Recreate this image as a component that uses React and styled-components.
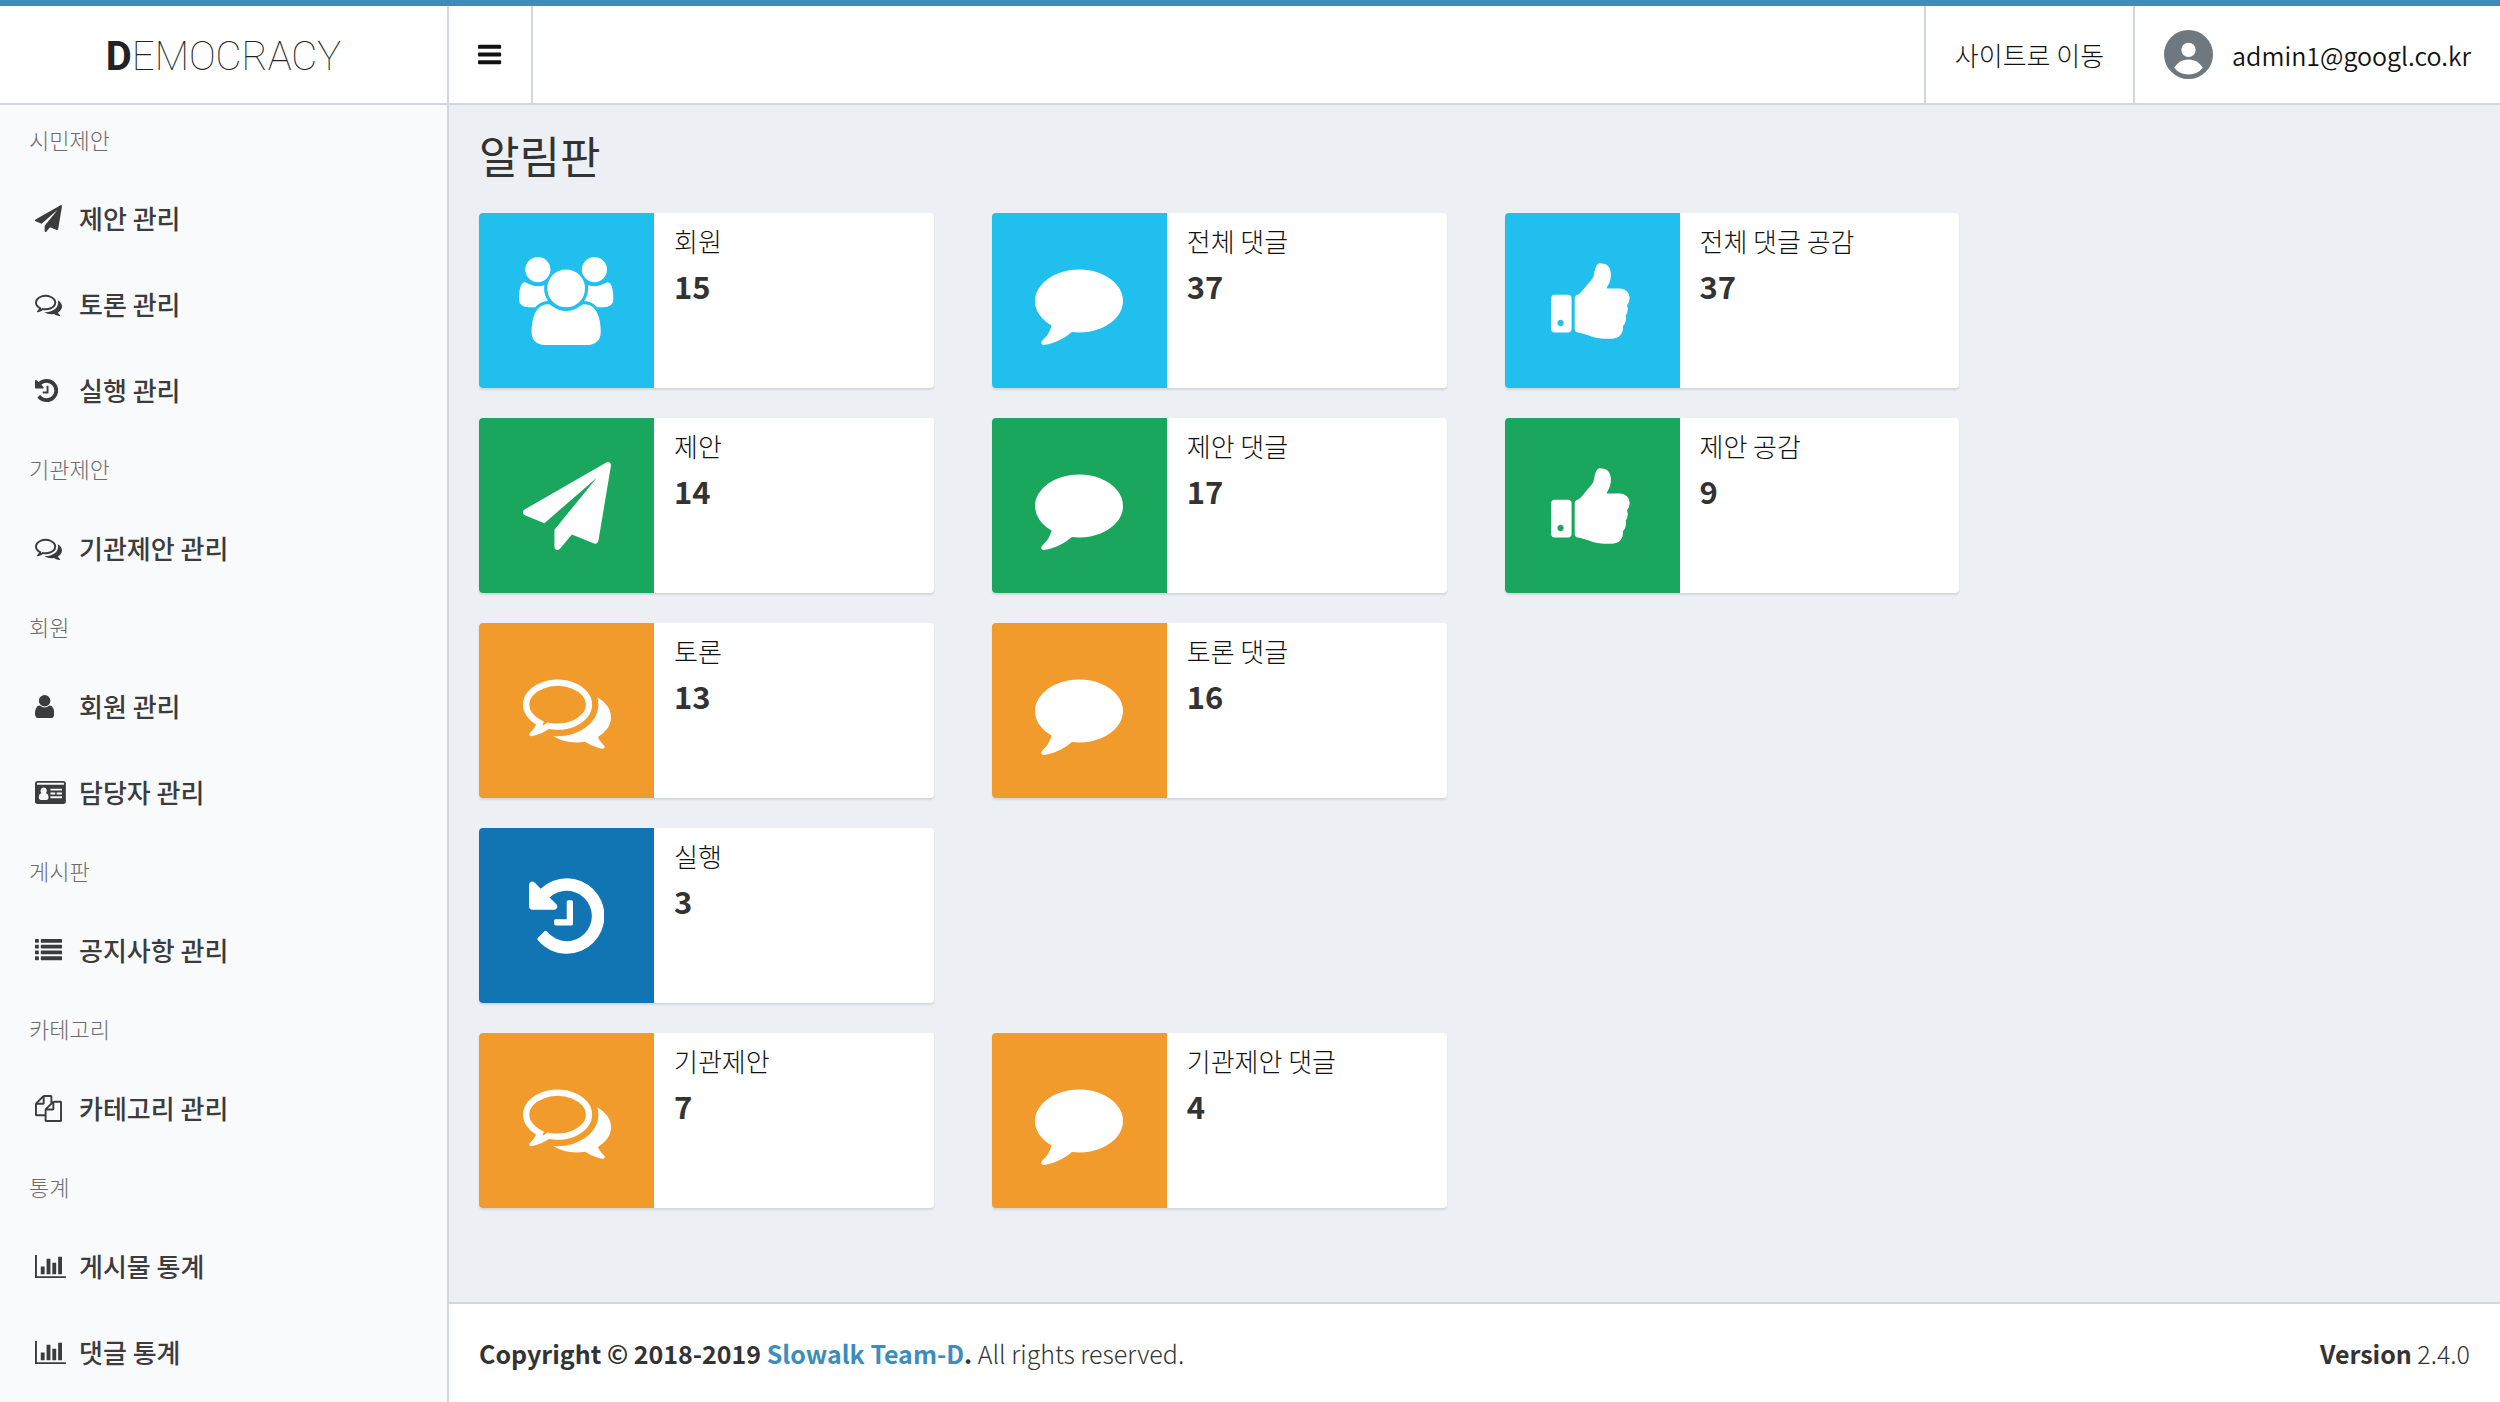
import React from "react";
import styled, { createGlobalStyle } from "styled-components";

const LINE = "#d2d6de";
const SANS = '"Noto Sans CJK KR", "Noto Sans", sans-serif';

const GlobalStyle = createGlobalStyle`
  *, *::before, *::after { box-sizing: border-box; }
  body {
    margin: 0;
    background: #f9fafc;
    color: #333;
    font-family: ${SANS};
    font-size: 26px;
    line-height: 40px;
  }
  a { color: inherit; text-decoration: none; }
  b { font-weight: 700; }
`;

/* ---------- icons ---------- */

const ICONS = {
  users: {
    box: [0, 1920],
    d: "M593 896q-162 5-265 128h-134q-82 0-138-40.5t-56-118.5q0-353 124-353 6 0 43.5 21t97.5 42.5 119 21.5q67 0 133-23-5 37-5 66 0 139 81 256zm1071 637q0 120-73 189.5t-194 69.5h-874q-121 0-194-69.5t-73-189.5q0-53 3.5-103.5t14-109 26.5-108.5 43-97.5 62-81 85.5-53.5 111.5-20q10 0 43 21.5t73 48 107 48 135 21.5 135-21.5 107-48 73-48 43-21.5q61 0 111.5 20t85.5 53.5 62 81 43 97.5 26.5 108.5 14 109 3.500 103.5zm-1024-1277q0 106-75 181t-181 75-181-75-75-181 75-181 181-75 181 75 75 181zm704 384q0 159-112.5 271.5t-271.5 112.5-271.5-112.5-112.5-271.5 112.5-271.5 271.5-112.5 271.5 112.5 112.5 271.5zm576 225q0 78-56 118.5t-138 40.5h-134q-103-123-265-128 81-117 81-256 0-29-5-66 66 23 133 23 59 0 119-21.5t97.5-42.5 43.5-21q124 0 124 353zm-128-609q0 106-75 181t-181 75-181-75-75-181 75-181 181-75 181 75 75 181z",
  },
  comment: {
    box: [0, 1792],
    d: "M1792 896q0 174-120 321.5t-326 233-450 85.5q-70 0-145-8-198 175-460 242-49 14-114 22-17 2-30.5-9t-17.5-29v-1q-3-4-.5-12t2-10 4.5-9.5l6-9 7-8.5 8-9q7-8 31-34.5t34.5-38 31-39.5 32.5-51 27-59 26-76q-157-89-247.5-220t-90.5-281q0-130 71-248.5t191-204.5 286-136.5 348-50.5q244 0 450 85.5t326 233 120 321.5z",
  },
  thumb: {
    box: [0, 1792],
    d: "M320 1344q0-26-19-45t-45-19q-27 0-45.5 19t-18.5 45q0 27 18.5 45.5t45.5 18.5q26 0 45-18.5t19-45.5zm160-512v640q0 26-19 45t-45 19h-288q-26 0-45-19t-19-45v-640q0-26 19-45t45-19h288q26 0 45 19t19 45zm1184 0q0 86-55 149 15 44 15 76 3 76-43 137 17 56 0 117-15 57-54 94 9 112-49 181-64 76-197 78h-129q-66 0-144-15.5t-121.5-29-120.5-39.5q-123-43-158-44-26-1-45-19.5t-19-44.5v-641q0-25 18-43.5t43-20.5q24-2 76-59t101-121q68-87 101-120 18-18 31-48t17.5-48.5 13.5-60.5q7-39 12.5-61t19.5-52 34-50q19-19 45-19 46 0 82.5 10.5t60 26 40 40.5 24 45 12 50 5 45 .5 39q0 38-9.5 76t-19 60-27.5 56q-3 6-10 18t-11 22-8 24h277q78 0 135 57t57 135z",
  },
  plane: {
    box: [0, 1792],
    d: "M1764 11q33 24 27 64l-256 1536q-5 29-32 45-14 8-31 8-11 0-24-5l-453-185-242 295q-18 23-49 23-13 0-22-4-19-7-30.5-23.5t-11.5-36.5v-349l864-1059-1069 925-395-162q-37-14-40-55-2-40 32-59l1664-960q15-9 32-9 20 0 36 11z",
  },
  comments: {
    box: [0, 1792],
    d: "M704 384q-153 0-286 52t-211.5 141-78.5 191q0 82 53 158t149 132l97 56-35 84q34-20 62-39l44-31 53 10q78 14 153 14 153 0 286-52t211.5-141 78.5-191-78.5-191-211.5-141-286-52zm0-128q191 0 353.5 68.5t256.5 186.5 94 257-94 257-256.5 186.5-353.5 68.5q-86 0-176-16-124 88-278 128-36 9-86 16h-3q-11 0-20.5-8t-11.5-21q-1-3-1-6.5t.5-6.5 2-6l2.5-5 3.5-5.5 4-5 4.5-5 4-4.5q5-6 23-25t26-29.5 22.5-29 25-38.5 20.5-44q-124-72-195-177t-71-224q0-139 94-257t256.5-186.5 353.5-68.5zm822 1169q10 24 20.5 44t25 38.5 22.5 29 26 29.5 23 25q1 1 4 4.5t4.5 5 4 5 3.5 5.5l2.5 5 2 6 .5 6.5-1 6.5q-3 14-13 22t-22 7q-50-7-86-16-154-40-278-128-90 16-176 16-271 0-472-132 58 4 88 4 161 0 309-45t264-129q125-92 192-212t67-254q0-77-23-152 129 71 204 178t75 230q0 120-71 224.5t-195 176.5z",
  },
  history: {
    box: [128, 1536],
    d: "M1664 896q0 156-61 298t-164 245-245 164-298 61q-172 0-327-72.5t-264-204.5q-7-10-6.5-22.5t8.5-20.5l137-138q10-9 25-9 16 2 23 12 73 95 179 147t225 52q104 0 198.5-40.5t163.5-109.5 109.5-163.5 40.5-198.5-40.5-198.5-109.5-163.5-163.5-109.5-198.5-40.5q-98 0-188 35.5t-160 101.5l137 138q31 30 14 69-17 40-59 40h-448q-26 0-45-19t-19-45v-448q0-42 40-59 39-17 69 14l130 129q107-101 244.5-156.5t284.5-55.5q156 0 298 61t245 164 164 245 61 298zm-640-288v448q0 14-9 23t-23 9h-320q-14 0-23-9t-9-23v-64q0-14 9-23t23-9h224v-352q0-14 9-23t23-9h64q14 0 23 9t9 23z",
  },
  user: {
    box: [256, 1280],
    d: "M1536 1399q0 109-62.5 187t-150.5 78h-854q-88 0-150.5-78t-62.5-187q0-85 8.5-160.5t31.5-152 58.5-131 94-89 134.5-34.5q131 128 313 128t313-128q76 0 134.5 34.5t94 89 58.5 131 31.5 152 8.5 160.5zm-256-887q0 159-112.5 271.5t-271.5 112.5-271.5-112.5-112.5-271.5 112.5-271.5 271.5-112.5 271.5 112.5 112.5 271.5z",
  },
  idCard: {
    box: [0, 2048],
    d: "M160 128h1728q66 0 113 47t47 113v1216q0 66-47 113t-113 47h-1728q-66 0-113-47t-47-113v-1216q0-66 47-113t113-47zM128 256v128h1792v-128zM576 560q-90 0-150 64t-60 156 60 156l20 18q-100 0-146 74t-46 202q0 74 42 122t100 48h360q58 0 100-48t42-122q0-128-46-202t-146-74l20-18q60-64 60-156t-60-156-150-64zM1024 640v128h768v-128zM1024 896v128h320v-128zM1440 896v128h352v-128zM1024 1152v128h768v-128z",
  },
  list: {
    box: [0, 1792],
    d: "M32 128h192q32 0 32 32v192q0 32-32 32h-192q-32 0-32-32v-192q0-32 32-32zM32 512h192q32 0 32 32v192q0 32-32 32h-192q-32 0-32-32v-192q0-32 32-32zM32 896h192q32 0 32 32v192q0 32-32 32h-192q-32 0-32-32v-192q0-32 32-32zM32 1280h192q32 0 32 32v192q0 32-32 32h-192q-32 0-32-32v-192q0-32 32-32zM416 128h1344q32 0 32 32v192q0 32-32 32h-1344q-32 0-32-32v-192q0-32 32-32zM416 512h1344q32 0 32 32v192q0 32-32 32h-1344q-32 0-32-32v-192q0-32 32-32zM416 896h1344q32 0 32 32v192q0 32-32 32h-1344q-32 0-32-32v-192q0-32 32-32zM416 1280h1344q32 0 32 32v192q0 32-32 32h-1344q-32 0-32-32v-192q0-32 32-32z",
  },
  files: {
    box: [0, 1792],
    d: "M1696 384q40 0 68 28t28 68v1216q0 40-28 68t-68 28h-960q-40 0-68-28t-28-68v-288h-544q-40 0-68-28t-28-68v-672q0-40 20-88t48-76l408-408q28-28 76-48t88-20h416q40 0 68 28t28 68v328q68-40 128-40h416zm-544 213l-299 299h299v-299zm-640-384l-299 299h299v-299zm196 647l316-316v-416h-384v416q0 40-28 68t-68 28h-416v640h512v-256q0-40 20-88t48-76zm956 804v-1152h-384v416q0 40-28 68t-68 28h-416v640h896z",
  },
  chart: {
    box: [0, 2048],
    d: "M640 896v512h-256v-512h256zm384-512v1024h-256v-1024h256zm1024 1152v128h-2048v-1536h128v1408h1920zm-640-896v768h-256v-768h256zm384-384v1152h-256v-1152h256z",
  },
  bars: {
    box: [128, 1536],
    d: "M1664 1344v128q0 26-19 45t-45 19h-1408q-26 0-45-19t-19-45v-128q0-26 19-45t45-19h1408q26 0 45 19t19 45zm0-512v128q0 26-19 45t-45 19h-1408q-26 0-45-19t-19-45v-128q0-26 19-45t45-19h1408q26 0 45 19t19 45zm0-512v128q0 26-19 45t-45 19h-1408q-26 0-45-19t-19-45v-128q0-26 19-45t45-19h1408q26 0 45 19t19 45z",
  },
};

const Glyph = styled.svg`
  display: block;
  flex: none;
  fill: currentColor;
`;

function Icon({ name, size }) {
  const { box, d } = ICONS[name];
  return (
    <Glyph
      viewBox={`${box[0]} 0 ${box[1]} 1792`}
      width={(size * box[1]) / 1792}
      height={size}
      aria-hidden="true"
    >
      <path fillRule="evenodd" d={d} />
    </Glyph>
  );
}

function Avatar() {
  return (
    <Glyph viewBox="0 0 48 48" width={49} height={49} aria-hidden="true">
      <circle cx="24" cy="24" r="24" fill="#6f787f" />
      <circle cx="24" cy="19.5" r="7" fill="#fff" />
      <path fill="#fff" d="M10 37q5-8 14-8t14 8q-5 6.500-14 6.500t-14-6.500z" />
    </Glyph>
  );
}

/* ---------- layout ---------- */

const Page = styled.div`
  min-height: 100vh;
  display: flex;
  flex-direction: column;
`;

const Header = styled.header`
  display: flex;
  height: 105px;
  background: #fff;
  border-top: 6px solid #3c8dbc;
  border-bottom: 2px solid ${LINE};
`;

const Logo = styled.a`
  flex: none;
  width: 449px;
  padding-top: 5px;
  display: flex;
  align-items: center;
  justify-content: center;
  border-right: 2px solid ${LINE};
  color: #222;
  font-family: Roboto, "Liberation Sans", sans-serif;
  font-size: 40px;
  font-weight: 100;
`;

const MenuToggle = styled.button`
  width: 84px;
  padding: 0;
  display: flex;
  align-items: center;
  justify-content: center;
  border: 0;
  border-right: 2px solid ${LINE};
  background: none;
  color: #111;
  cursor: pointer;
`;

const HeaderNav = styled.nav`
  display: flex;
  margin-left: auto;
`;

const HeaderLink = styled.a`
  display: flex;
  align-items: center;
  gap: 19px;
  padding: 0 29px;
  border-left: 2px solid ${LINE};
  color: #111;
  font-weight: 300;
`;

const UserName = styled.span`
  font-size: 25px;
  font-weight: 350;
`;

const Body = styled.div`
  flex: 1;
  display: flex;
`;

const Sidebar = styled.nav`
  flex: none;
  width: 449px;
  border-right: 2px solid ${LINE};
  background: #f9fafc;
`;

const SectionTitle = styled.h2`
  margin: 0;
  padding: 0 29px 2px;
  color: #6c6c6c;
  font-size: 22px;
  font-weight: 300;
  line-height: 70px;

  &:first-child { line-height: 68px; }
`;

const MenuList = styled.ul`
  margin: 0;
  padding: 0;
  list-style: none;
`;

const MenuLink = styled.a`
  display: flex;
  align-items: center;
  height: 86px;
  padding: 0 35px;
  color: #3c3c3c;
  font-weight: 500;
`;

const MenuIcon = styled.span`
  flex: none;
  width: 44px;
`;

const Main = styled.div`
  flex: 1;
  display: flex;
  flex-direction: column;
  background: #ecf0f5;
`;

const Content = styled.main`
  flex: 1;
  padding: 20px 28px 20px 30px;
`;

const PageTitle = styled.h1`
  margin: 0 0 28px;
  font-size: 44px;
  font-weight: 400;
  line-height: 60px;
`;

const CardRows = styled.div`
  display: grid;
  gap: 30px;
`;

const CardRow = styled.div`
  display: grid;
  grid-template-columns: repeat(4, minmax(0, 1fr));
  gap: 58px;
`;

const Card = styled.section`
  display: flex;
  min-height: 175px;
  overflow: hidden;
  border-radius: 4px;
  background: #fff;
  box-shadow: 0 2px 2px rgba(0, 0, 0, 0.1);
`;

const CardIcon = styled.div`
  flex: none;
  width: 175px;
  display: flex;
  align-items: center;
  justify-content: center;
  background: ${(p) => p.$color};
  color: #fff;
`;

const CardText = styled.div`
  padding: 8px 20px;
`;

const CardLabel = styled.div`
  color: #111;
  font-weight: 300;
`;

const CardValue = styled.div`
  font-size: 31px;
  font-weight: 700;
  line-height: 50px;
`;

const Footer = styled.footer`
  display: flex;
  justify-content: space-between;
  padding: 29px 30px;
  border-top: 2px solid ${LINE};
  background: #fff;
  font-size: 25px;
  font-weight: 300;

  a { color: #3c8dbc; }
`;

/* ---------- data ---------- */

const MENU = [
  ["시민제안", [["plane", "제안 관리"], ["comments", "토론 관리"], ["history", "실행 관리"]]],
  ["기관제안", [["comments", "기관제안 관리"]]],
  ["회원", [["user", "회원 관리"], ["idCard", "담당자 관리"]]],
  ["게시판", [["list", "공지사항 관리"]]],
  ["카테고리", [["files", "카테고리 관리"]]],
  ["통계", [["chart", "게시물 통계"], ["chart", "댓글 통계"]]],
];

const AQUA = "#20bfee";
const GREEN = "#1aa65d";
const ORANGE = "#f09b2c";
const BLUE = "#1175b4";

const ROWS = [
  [AQUA, [["users", "회원", 15], ["comment", "전체 댓글", 37], ["thumb", "전체 댓글 공감", 37]]],
  [GREEN, [["plane", "제안", 14], ["comment", "제안 댓글", 17], ["thumb", "제안 공감", 9]]],
  [ORANGE, [["comments", "토론", 13], ["comment", "토론 댓글", 16]]],
  [BLUE, [["history", "실행", 3]]],
  [ORANGE, [["comments", "기관제안", 7], ["comment", "기관제안 댓글", 4]]],
];

export default function App() {
  return (
    <Page>
      <GlobalStyle />
      <Header>
        <Logo href="#"><span><b>D</b>EMOCRACY</span></Logo>
        <MenuToggle type="button" aria-label="메뉴">
          <Icon name="bars" size={27} />
        </MenuToggle>
        <HeaderNav>
          <HeaderLink href="#">사이트로 이동</HeaderLink>
          <HeaderLink href="#">
            <Avatar />
            <UserName>admin1@googl.co.kr</UserName>
          </HeaderLink>
        </HeaderNav>
      </Header>
      <Body>
        <Sidebar>
          {MENU.map(([title, items]) => (
            <React.Fragment key={title}>
              <SectionTitle>{title}</SectionTitle>
              <MenuList>
                {items.map(([icon, label]) => (
                  <li key={label}>
                    <MenuLink href="#">
                      <MenuIcon><Icon name={icon} size={27} /></MenuIcon>
                      {label}
                    </MenuLink>
                  </li>
                ))}
              </MenuList>
            </React.Fragment>
          ))}
        </Sidebar>
        <Main>
          <Content>
            <PageTitle>알림판</PageTitle>
            <CardRows>
              {ROWS.map(([color, cards], i) => (
                <CardRow key={i}>
                  {cards.map(([icon, label, value]) => (
                    <Card key={label}>
                      <CardIcon $color={color}><Icon name={icon} size={88} /></CardIcon>
                      <CardText>
                        <CardLabel>{label}</CardLabel>
                        <CardValue>{value}</CardValue>
                      </CardText>
                    </Card>
                  ))}
                </CardRow>
              ))}
            </CardRows>
          </Content>
          <Footer>
            <div>
              <b>Copyright © 2018-2019 <a href="#">Slowalk Team-D</a>.</b> All rights reserved.
            </div>
            <div><b>Version</b> 2.4.0</div>
          </Footer>
        </Main>
      </Body>
    </Page>
  );
}
